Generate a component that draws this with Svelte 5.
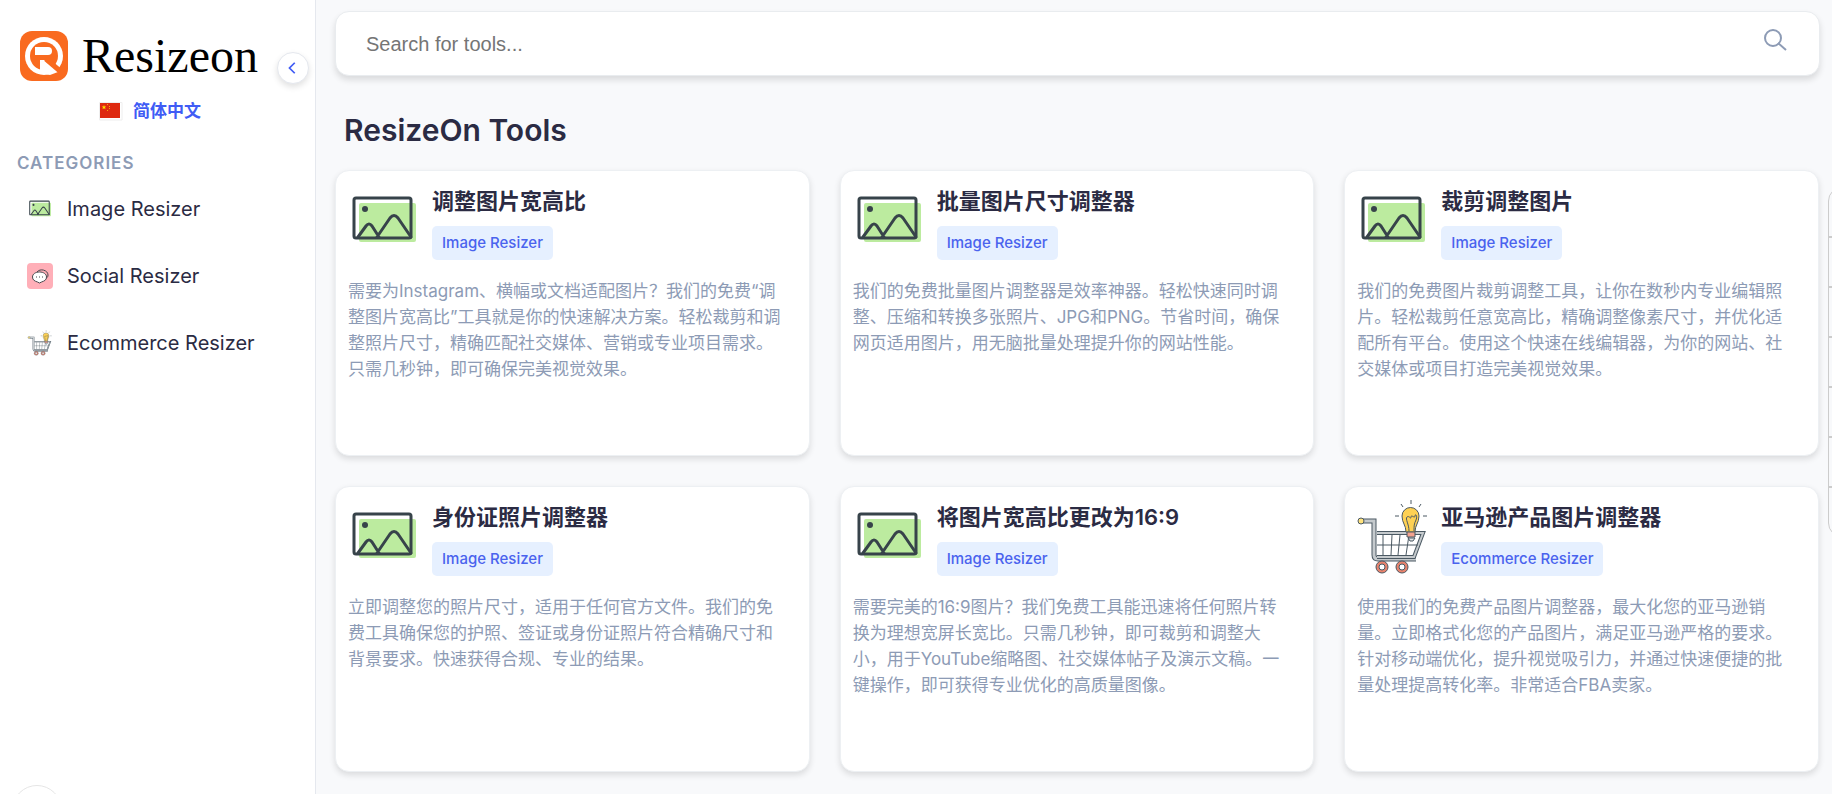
<script lang="ts">
  type Category = 'Image Resizer' | 'Social Resizer' | 'Ecommerce Resizer';
  type Tool = { title: string; category: Category; text: string };

  const categories: Category[] = ['Image Resizer', 'Social Resizer', 'Ecommerce Resizer'];

  const tools: Tool[] = [
    {
      title: '调整图片宽高比',
      category: 'Image Resizer',
      text: '需要为Instagram、横幅或文档适配图片？我们的免费“调整图片宽高比”工具就是你的快速解决方案。轻松裁剪和调整照片尺寸，精确匹配社交媒体、营销或专业项目需求。只需几秒钟，即可确保完美视觉效果。'
    },
    {
      title: '批量图片尺寸调整器',
      category: 'Image Resizer',
      text: '我们的免费批量图片调整器是效率神器。轻松快速同时调整、压缩和转换多张照片、JPG和PNG。节省时间，确保网页适用图片，用无脑批量处理提升你的网站性能。'
    },
    {
      title: '裁剪调整图片',
      category: 'Image Resizer',
      text: '我们的免费图片裁剪调整工具，让你在数秒内专业编辑照片。轻松裁剪任意宽高比，精确调整像素尺寸，并优化适配所有平台。使用这个快速在线编辑器，为你的网站、社交媒体或项目打造完美视觉效果。'
    },
    {
      title: '身份证照片调整器',
      category: 'Image Resizer',
      text: '立即调整您的照片尺寸，适用于任何官方文件。我们的免费工具确保您的护照、签证或身份证照片符合精确尺寸和背景要求。快速获得合规、专业的结果。'
    },
    {
      title: '将图片宽高比更改为16:9',
      category: 'Image Resizer',
      text: '需要完美的16:9图片？我们免费工具能迅速将任何照片转换为理想宽屏长宽比。只需几秒钟，即可裁剪和调整大小，用于YouTube缩略图、社交媒体帖子及演示文稿。一键操作，即可获得专业优化的高质量图像。'
    },
    {
      title: '亚马逊产品图片调整器',
      category: 'Ecommerce Resizer',
      text: '使用我们的免费产品图片调整器，最大化您的亚马逊销量。立即格式化您的产品图片，满足亚马逊严格的要求。针对移动端优化，提升视觉吸引力，并通过快速便捷的批量处理提高转化率。非常适合FBA卖家。'
    }
  ];

  const shareLinks = ['Facebook', 'X', 'LinkedIn', 'WhatsApp', 'Telegram', 'Reddit', 'Email'];

  let query = $state('');

  let visibleTools = $derived(
    tools.filter((tool) => (tool.title + tool.category).toLowerCase().includes(query.trim().toLowerCase()))
  );
</script>

{#snippet icon(category: Category)}
  {#if category === 'Image Resizer'}
    <svg viewBox="0 0 72 76" aria-hidden="true">
      <rect x="11" y="20" width="57" height="39" rx="2" fill="#bceb9f" />
      <g fill="none" stroke="#37434a" stroke-width="3" stroke-linejoin="round" stroke-linecap="round">
        <rect x="6" y="15" width="57" height="40" rx="2" />
        <path d="M10 54 18 43q3-4 6 0l7 11M29 54 42 35q4-5 8 0L63 54" />
      </g>
      <circle cx="17" cy="26" r="3" fill="#37434a" />
    </svg>
  {:else if category === 'Social Resizer'}
    <svg viewBox="0 0 26 26" aria-hidden="true">
      <rect width="26" height="26" rx="4" fill="#ffafb8" />
      <g stroke="#4a4a50" stroke-width="1">
        <path d="M10 9c3-4 11-2 11 3 0 2-1 3-3 4" fill="#ffafb8" />
        <path d="M12.500 9c4 0 7 2 7 5s-2 4-5 5l-2 1-2-1c-3-1-5-2-5-5s3-5 7-5Z" fill="#fff" />
      </g>
      <path d="M9 14h1M12 14h1M15 14h1" stroke="#4a4a50" stroke-width="1" />
    </svg>
  {:else}
    <svg viewBox="0 0 72 76" aria-hidden="true">
      <path d="M6 22h11v34q0 4 4 4h38" fill="none" stroke="#4b5963" stroke-width="5" />
      <path d="M6 22h11v34q0 4 4 4h38" fill="none" stroke="#c5cacd" stroke-width="3" />
      <path d="M20 34h46L57 58H20" fill="none" stroke="#4b5963" stroke-width="4" />
      <path d="M20 34h46L57 58H20" fill="none" stroke="#c5cacd" stroke-width="2" />
      <path d="M26 36v20M35 36l-1 20M43 36l-2 20M52 36l-3 20M20 46h41" stroke="#4b5963" stroke-width="1" />
      <circle cx="4" cy="22" r="3" fill="#ffe27d" stroke="#4b5963" />
      <g fill="#e8836d" stroke="#4b5963">
        <circle cx="25" cy="68" r="6" />
        <circle cx="45" cy="68" r="6" />
      </g>
      <g fill="#fff" stroke="#4b5963">
        <circle cx="25" cy="68" r="3" />
        <circle cx="45" cy="68" r="3" />
      </g>
      <path d="M49 33c0-7-4-9-4-16a8 8 0 0 1 17 0c0 7-4 9-4 16Z" fill="#fed154" stroke="#4b5963" />
      <path d="M52 32c0-7-4-12-2-14s4 3 4 0 4 2 4-1 3 0 1 4-2 6-2 11" fill="none" stroke="#4b5963" />
      <path d="M50 33h8v5h-8Z" fill="#f3a28f" stroke="#4b5963" />
      <path d="M51 39h7l-2 3h-3Z" fill="#dfe2e4" stroke="#4b5963" />
      <path d="M54 1v4M44 5l2 3M64 5l-2 3M38 17h4M66 17h4" stroke="#4b5963" />
    </svg>
  {/if}
{/snippet}

<div class="layout">
  <aside class="sidebar">
    <div class="brand-row">
      <a class="brand" href="/">
        <svg viewBox="0 0 48 50" aria-hidden="true">
          <rect width="48" height="50" rx="12" fill="#f96a1f" />
          <circle cx="24" cy="25" r="19" fill="#fff" />
          <circle cx="24" cy="25" r="14" fill="#f96a1f" />
          <path d="M15 16h13q4 0 4 4t-4 4H15Z" fill="#fff" />
          <path d="M20 29h4l14 12-8 3-10-2Z" fill="#fff" />
          <path d="m26 28 14 12" stroke="#f96a1f" stroke-width="5" />
        </svg>
        <span>Resizeon</span>
      </a>
      <button class="collapse" aria-label="Collapse sidebar">
        <svg viewBox="0 0 16 16" aria-hidden="true"><path d="M10 2 4 8l6 6" /></svg>
      </button>
    </div>

    <a class="language" href="/zh">
      <svg viewBox="0 0 24 19" aria-hidden="true">
        <path d="M1 1h20v15H1Z" fill="#de2910" />
        <path d="m5 3 .6 1.600H7.200L6 5.600l.5 1.700L5 6.300 3.500 7.300 4 5.600 2.700 4.600h1.700Z" fill="#ffde00" />
        <path d="M8 2h1v1H8ZM10 4h1v1h-1ZM10 6h1v1h-1ZM8 8h1v1H8Z" fill="#f2a50b" />
        <path d="M0.500 0.500h22.500v17.500H0.500Z" fill="none" stroke="#eee" />
      </svg>
      简体中文
    </a>

    <h2>Categories</h2>
    <nav>
      {#each categories as category (category)}
        <a href="#tools">{@render icon(category)}{category}</a>
      {/each}
    </nav>
  </aside>

  <main>
    <label class="search">
      <input type="search" placeholder="Search for tools..." aria-label="Search for tools" bind:value={query} />
      <svg viewBox="0 0 24 24" aria-hidden="true"><circle cx="10" cy="9" r="8" /><path d="m15 14 8 7" /></svg>
    </label>

    <h1>ResizeOn Tools</h1>

    <div class="grid" id="tools">
      {#each visibleTools as tool (tool.title)}
        <article class="card">
          <header>
            {@render icon(tool.category)}
            <div>
              <h3>{tool.title}</h3>
              <span class="tag">{tool.category}</span>
            </div>
          </header>
          <p>{tool.text}</p>
        </article>
      {/each}
    </div>
  </main>
</div>

<div class="share">
  {#each shareLinks as link (link)}
    <a href="#share" aria-label={link}></a>
  {/each}
</div>

<button class="floating" aria-label="Scroll to top"></button>

<style>
  :global(body) {
    overflow: hidden;
    color: #2b2b43;
    background: #f8f9fb;
    font-family: Inter, 'Noto Sans CJK SC', sans-serif;
  }

  * {
    box-sizing: border-box;
  }

  a {
    color: inherit;
    text-decoration: none;
  }

  .layout {
    display: flex;
    min-height: 100vh;
  }

  .sidebar {
    flex: 0 0 316px;
    padding: 28px 6px 0 17px;
    background: #fff;
    border-right: 1px solid #e5e8ee;
  }

  .brand-row {
    display: flex;
    align-items: center;
    justify-content: space-between;
  }

  .brand {
    display: flex;
    align-items: center;
    gap: 14px;
    color: #000;
    font: 48px/56px 'Liberation Serif', serif;
  }

  .brand svg {
    width: 48px;
    height: 50px;
    margin-left: 3px;
  }

  .collapse {
    display: grid;
    place-items: center;
    width: 32px;
    height: 32px;
    margin-top: 24px;
    padding: 0;
    background: #fff;
    border: 1px solid #e5e8ee;
    border-radius: 50%;
    box-shadow: 0 3px 6px rgba(0, 0, 0, 0.12);
  }

  .collapse svg {
    width: 14px;
    fill: none;
    stroke: #405cf5;
    stroke-width: 2;
  }

  .language {
    display: flex;
    align-items: center;
    justify-content: center;
    gap: 10px;
    margin: 11px 26px 0 0;
    color: #405cf5;
    font-size: 17px;
    font-weight: 600;
    line-height: 32px;
  }

  .language svg {
    width: 24px;
    height: 19px;
  }

  h2 {
    margin: 20px 0 0;
    color: #8d9bb5;
    font-size: 17px;
    font-weight: 600;
    line-height: 32px;
    letter-spacing: 1px;
    text-transform: uppercase;
  }

  nav {
    display: grid;
    gap: 19px;
    margin-top: 6px;
  }

  nav a {
    display: flex;
    align-items: center;
    gap: 14px;
    padding: 0 10px;
    font-size: 20px;
    line-height: 48px;
  }

  nav svg {
    width: 26px;
    height: 26px;
  }

  main {
    flex: 1;
    min-width: 0;
    padding: 11px 12px 0 19px;
  }

  .search {
    display: flex;
    align-items: center;
    height: 65px;
    padding: 0 32px 0 30px;
    background: #fff;
    border: 1px solid #e9ecef;
    border-radius: 14px;
    box-shadow: 0 4px 6px rgba(0, 0, 0, 0.12);
  }

  .search input {
    flex: 1;
    min-width: 0;
    padding: 0;
    border: 0;
    outline: 0;
    background: none;
    font: 20px/32px 'Liberation Sans', sans-serif;
  }

  .search input::placeholder {
    color: #757575;
  }

  .search svg {
    width: 24px;
    height: 24px;
    margin-bottom: 6px;
    fill: none;
    stroke: #8d9bb5;
    stroke-width: 2;
  }

  h1 {
    margin: 35px 9px 21px;
    font-size: 30px;
    font-weight: 600;
    line-height: 38px;
  }

  .grid {
    display: grid;
    grid-template-columns: repeat(3, minmax(0, 1fr));
    gap: 30px;
    padding-right: 1px;
  }

  .card {
    min-height: 286px;
    padding: 12px;
    background: #fff;
    border: 1px solid #edf0f3;
    border-radius: 14px;
    box-shadow: 0 3px 6px rgba(0, 0, 0, 0.12);
  }

  .card header {
    display: flex;
    gap: 12px;
  }

  .card header svg {
    flex: none;
    width: 72px;
    height: 76px;
  }

  h3 {
    margin: 1px 0 8px;
    font-size: 22px;
    font-weight: 600;
    line-height: 34px;
  }

  .tag {
    display: inline-block;
    padding: 0 10px;
    color: #4a63ee;
    background: #e6f0ff;
    border-radius: 5px;
    font-size: 15px;
    font-weight: 500;
    line-height: 34px;
  }

  .card p {
    margin: 18px 12px 0 0;
    color: #8d9bb5;
    font-size: 17px;
    line-height: 26px;
  }

  .share {
    position: fixed;
    top: 187px;
    right: -46px;
    width: 50px;
    overflow: hidden;
    background: #f8f9fb;
    border: 1px solid #ccc;
    border-radius: 14px;
  }

  .share a {
    display: block;
    height: 50px;
    border-bottom: 2px solid #ccc;
  }

  .share a:last-child {
    height: 48px;
    border-bottom: 0;
  }

  .floating {
    position: fixed;
    top: 785px;
    left: 12px;
    width: 50px;
    height: 50px;
    background: #fff;
    border: 1px solid #e5e5e5;
    border-radius: 50%;
  }
</style>
